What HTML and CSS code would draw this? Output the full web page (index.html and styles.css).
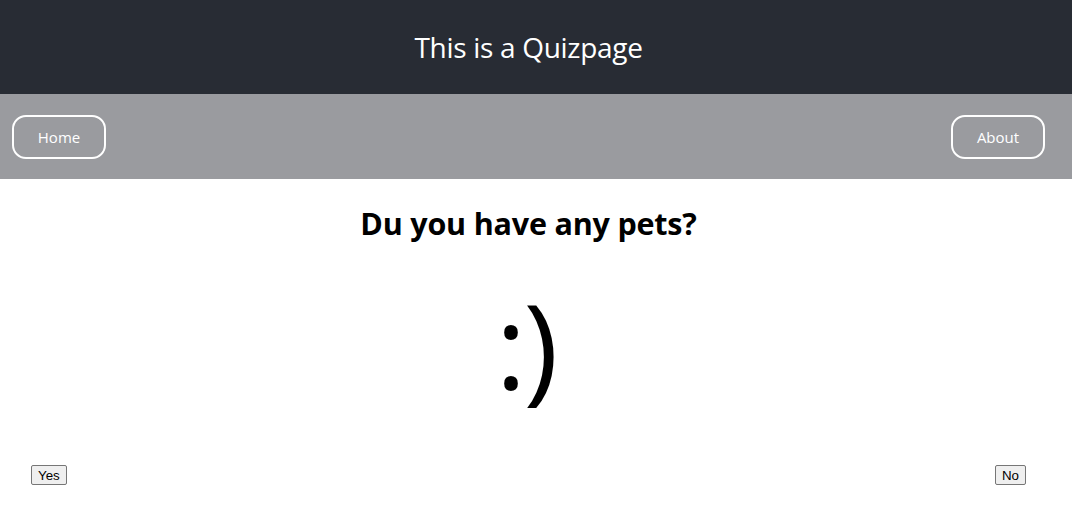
FILE: index.html
```html
<!DOCTYPE html>
<html>
<head>
<meta charset="utf-8">
<link rel="stylesheet" href="styles.css">
</head>
<body>
<header class="top">
  <div class="title">This is a Quizpage</div>
</header>
<nav class="nav">
  <button class="navbtn">Home</button>
  <button class="navbtn">About</button>
</nav>
<main class="quiz">
  <h1 class="question">Du you have any pets?</h1>
  <div class="smiley">:)</div>
  <div class="answers">
    <button class="ans">Yes</button>
    <button class="ans">No</button>
  </div>
</main>
</body>
</html>
```
FILE: styles.css
```css
html, body {
  margin: 0;
  padding: 0;
  background: #ffffff;
  font-family: "Open Sans", "Noto Sans", sans-serif;
}
.top {
  height: 94px;
  background: #282c34;
  display: flex;
  align-items: center;
  justify-content: center;
  padding-right: 15px;
}
.title {
  color: #ffffff;
  font-size: 28px;
  letter-spacing: -0.3px;
}
.nav {
  height: 85px;
  background: #9a9b9f;
  display: flex;
  justify-content: space-between;
  align-items: center;
  padding: 0 27px 0 12px;
}
.navbtn {
  height: 44px;
  width: 94px;
  background: transparent;
  border: 2px solid #ffffff;
  border-radius: 14px;
  color: #ffffff;
  font-family: "Open Sans", "Noto Sans", sans-serif;
  font-size: 15px;
  padding: 0;
}
.quiz {
  display: flex;
  flex-direction: column;
  align-items: center;
  padding-right: 15px;
}
.question {
  margin: 23px 0 0;
  font-size: 30.5px;
  font-weight: 700;
  letter-spacing: -0.2px;
  line-height: 42px;
}
.smiley {
  font-size: 118px;
  line-height: 130px;
  margin-top: 35px;
  letter-spacing: -3px;
  padding-right: 6px;
  font-family: "Open Sans", "Noto Sans", sans-serif;
}
.answers {
  align-self: stretch;
  display: flex;
  justify-content: space-between;
  align-items: flex-start;
  padding: 0 31px;
  margin-top: 56px;
}
.ans {
  font-family: "Liberation Sans", Arial, sans-serif;
  font-size: 13.33px;
  padding: 2px 6px;
  height: 20px;
  border: 1px solid #767676;
  border-radius: 2px;
  background: #efefef;
  color: #000;
}
```
